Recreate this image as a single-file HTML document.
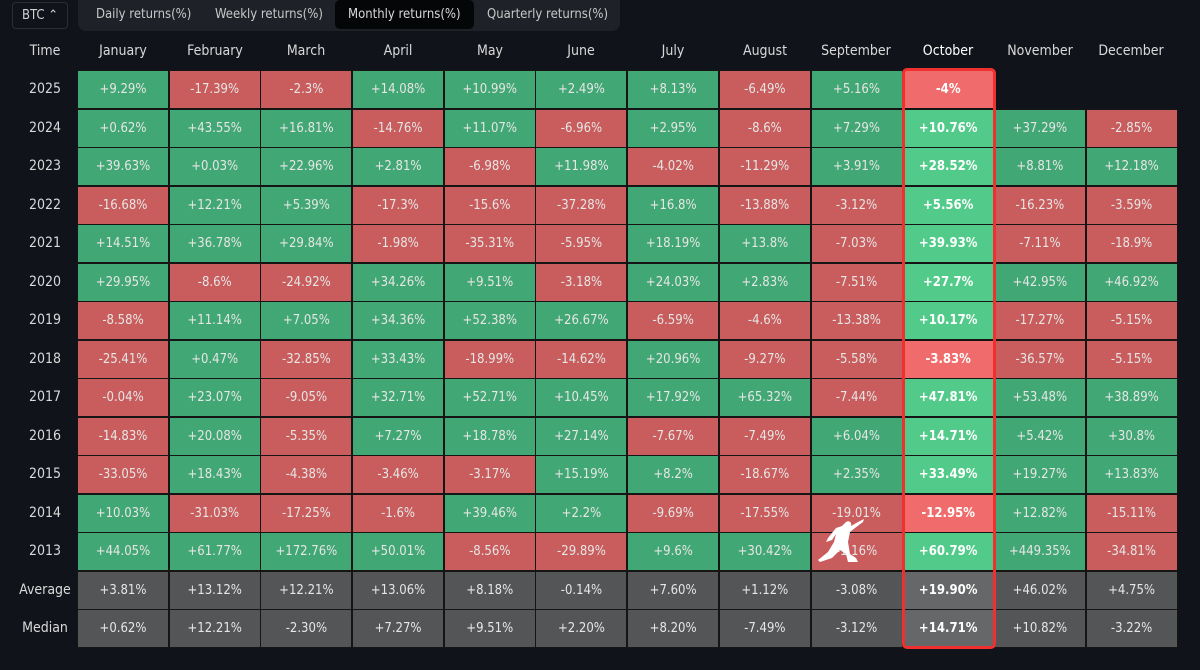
<!DOCTYPE html>
<html><head><meta charset="utf-8"><style>
*{margin:0;padding:0;box-sizing:border-box}
body{width:1200px;height:670px;background:#10131a;font-family:"DejaVu Sans Condensed","Liberation Sans",sans-serif;color:#d9d9d9;position:relative;overflow:hidden}
.btc{position:absolute;left:12px;top:2px;width:56px;height:27px;border:1px solid #2a2e35;border-radius:4px;font-size:13px;color:#d0d0d0;line-height:25px;padding-left:9px}
.tabs{position:absolute;left:78px;top:0;width:542px;height:31px;background:#1e2127;border-radius:0 0 8px 8px;font-size:13px;color:#c8c8c8}
.tabs span{position:absolute;top:7px}
.tabs .act{background:#050608;border-radius:5px;top:0;height:29px;line-height:29px;padding:0 13px;color:#d8d8d8}
.hd{position:absolute;top:43px;font-size:14px;color:#d9d9d9;text-align:center;width:90px}
.yr{position:absolute;left:0;width:90px;text-align:center;font-size:14px;color:#d9d9d9}
.grid{position:absolute;left:78px;top:71px;display:grid;grid-template-columns:repeat(12,90px);grid-auto-rows:37px;column-gap:1.7px;row-gap:1.5px}
.grid div{font-size:13px;text-align:center;line-height:37px;color:#e6e6e6;outline:1px solid #151515}
.g{background:#41a774}.r{background:#c95c5c}.n{background:#545556}.e{background:transparent;outline:none!important}
.G{background:#52cb8a;color:#fff!important;font-weight:bold}.R{background:#f06c6c;color:#fff!important;font-weight:bold}.N{background:#666768;color:#fff!important;font-weight:bold}
.box{position:absolute;left:902px;top:68px;width:94px;height:581px;border:3px solid #f0302f;border-radius:5px}
</style></head><body>
<div class="btc">BTC ⌃</div>
<div class="tabs"><span style="left:18px">Daily returns(%)</span><span style="left:137px">Weekly returns(%)</span><span class="act" style="left:257px">Monthly returns(%)</span><span style="left:409px">Quarterly returns(%)</span></div>
<div class="hd" style="left:0">Time</div>
<div class="hd" style="left:78px">January</div><div class="hd" style="left:170px">February</div><div class="hd" style="left:261px">March</div><div class="hd" style="left:353px">April</div><div class="hd" style="left:445px">May</div><div class="hd" style="left:536px">June</div><div class="hd" style="left:628px">July</div><div class="hd" style="left:720px">August</div><div class="hd" style="left:811px">September</div><div class="hd" style="left:903px;color:#fff">October</div><div class="hd" style="left:995px">November</div><div class="hd" style="left:1086px">December</div>
<div class="yr" style="top:81px">2025</div><div class="yr" style="top:120px">2024</div><div class="yr" style="top:158px">2023</div><div class="yr" style="top:197px">2022</div><div class="yr" style="top:235px">2021</div><div class="yr" style="top:274px">2020</div><div class="yr" style="top:312px">2019</div><div class="yr" style="top:351px">2018</div><div class="yr" style="top:389px">2017</div><div class="yr" style="top:428px">2016</div><div class="yr" style="top:466px">2015</div><div class="yr" style="top:505px">2014</div><div class="yr" style="top:543px">2013</div><div class="yr" style="top:582px">Average</div><div class="yr" style="top:620px">Median</div>
<div class="grid">
<div class="g">+9.29%</div><div class="r">-17.39%</div><div class="r">-2.3%</div><div class="g">+14.08%</div><div class="g">+10.99%</div><div class="g">+2.49%</div><div class="g">+8.13%</div><div class="r">-6.49%</div><div class="g">+5.16%</div><div class="R">-4%</div><div class="e"></div><div class="e"></div>
<div class="g">+0.62%</div><div class="g">+43.55%</div><div class="g">+16.81%</div><div class="r">-14.76%</div><div class="g">+11.07%</div><div class="r">-6.96%</div><div class="g">+2.95%</div><div class="r">-8.6%</div><div class="g">+7.29%</div><div class="G">+10.76%</div><div class="g">+37.29%</div><div class="r">-2.85%</div>
<div class="g">+39.63%</div><div class="g">+0.03%</div><div class="g">+22.96%</div><div class="g">+2.81%</div><div class="r">-6.98%</div><div class="g">+11.98%</div><div class="r">-4.02%</div><div class="r">-11.29%</div><div class="g">+3.91%</div><div class="G">+28.52%</div><div class="g">+8.81%</div><div class="g">+12.18%</div>
<div class="r">-16.68%</div><div class="g">+12.21%</div><div class="g">+5.39%</div><div class="r">-17.3%</div><div class="r">-15.6%</div><div class="r">-37.28%</div><div class="g">+16.8%</div><div class="r">-13.88%</div><div class="r">-3.12%</div><div class="G">+5.56%</div><div class="r">-16.23%</div><div class="r">-3.59%</div>
<div class="g">+14.51%</div><div class="g">+36.78%</div><div class="g">+29.84%</div><div class="r">-1.98%</div><div class="r">-35.31%</div><div class="r">-5.95%</div><div class="g">+18.19%</div><div class="g">+13.8%</div><div class="r">-7.03%</div><div class="G">+39.93%</div><div class="r">-7.11%</div><div class="r">-18.9%</div>
<div class="g">+29.95%</div><div class="r">-8.6%</div><div class="r">-24.92%</div><div class="g">+34.26%</div><div class="g">+9.51%</div><div class="r">-3.18%</div><div class="g">+24.03%</div><div class="g">+2.83%</div><div class="r">-7.51%</div><div class="G">+27.7%</div><div class="g">+42.95%</div><div class="g">+46.92%</div>
<div class="r">-8.58%</div><div class="g">+11.14%</div><div class="g">+7.05%</div><div class="g">+34.36%</div><div class="g">+52.38%</div><div class="g">+26.67%</div><div class="r">-6.59%</div><div class="r">-4.6%</div><div class="r">-13.38%</div><div class="G">+10.17%</div><div class="r">-17.27%</div><div class="r">-5.15%</div>
<div class="r">-25.41%</div><div class="g">+0.47%</div><div class="r">-32.85%</div><div class="g">+33.43%</div><div class="r">-18.99%</div><div class="r">-14.62%</div><div class="g">+20.96%</div><div class="r">-9.27%</div><div class="r">-5.58%</div><div class="R">-3.83%</div><div class="r">-36.57%</div><div class="r">-5.15%</div>
<div class="r">-0.04%</div><div class="g">+23.07%</div><div class="r">-9.05%</div><div class="g">+32.71%</div><div class="g">+52.71%</div><div class="g">+10.45%</div><div class="g">+17.92%</div><div class="g">+65.32%</div><div class="r">-7.44%</div><div class="G">+47.81%</div><div class="g">+53.48%</div><div class="g">+38.89%</div>
<div class="r">-14.83%</div><div class="g">+20.08%</div><div class="r">-5.35%</div><div class="g">+7.27%</div><div class="g">+18.78%</div><div class="g">+27.14%</div><div class="r">-7.67%</div><div class="r">-7.49%</div><div class="g">+6.04%</div><div class="G">+14.71%</div><div class="g">+5.42%</div><div class="g">+30.8%</div>
<div class="r">-33.05%</div><div class="g">+18.43%</div><div class="r">-4.38%</div><div class="r">-3.46%</div><div class="r">-3.17%</div><div class="g">+15.19%</div><div class="g">+8.2%</div><div class="r">-18.67%</div><div class="g">+2.35%</div><div class="G">+33.49%</div><div class="g">+19.27%</div><div class="g">+13.83%</div>
<div class="g">+10.03%</div><div class="r">-31.03%</div><div class="r">-17.25%</div><div class="r">-1.6%</div><div class="g">+39.46%</div><div class="g">+2.2%</div><div class="r">-9.69%</div><div class="r">-17.55%</div><div class="r">-19.01%</div><div class="R">-12.95%</div><div class="g">+12.82%</div><div class="r">-15.11%</div>
<div class="g">+44.05%</div><div class="g">+61.77%</div><div class="g">+172.76%</div><div class="g">+50.01%</div><div class="r">-8.56%</div><div class="r">-29.89%</div><div class="g">+9.6%</div><div class="g">+30.42%</div><div class="r">-1.16%</div><div class="G">+60.79%</div><div class="g">+449.35%</div><div class="r">-34.81%</div>
<div class="n">+3.81%</div><div class="n">+13.12%</div><div class="n">+12.21%</div><div class="n">+13.06%</div><div class="n">+8.18%</div><div class="n">-0.14%</div><div class="n">+7.60%</div><div class="n">+1.12%</div><div class="n">-3.08%</div><div class="N">+19.90%</div><div class="n">+46.02%</div><div class="n">+4.75%</div>
<div class="n">+0.62%</div><div class="n">+12.21%</div><div class="n">-2.30%</div><div class="n">+7.27%</div><div class="n">+9.51%</div><div class="n">+2.20%</div><div class="n">+8.20%</div><div class="n">-7.49%</div><div class="n">-3.12%</div><div class="N">+14.71%</div><div class="n">+10.82%</div><div class="n">-3.22%</div>
</div>
<div class="box"></div>
<svg style="position:absolute;left:818px;top:518px" width="48" height="46" viewBox="0 0 48 46"><path d="M28 4 C31 2 34 4 33 8 L40 4 L46 1 L45 4 L37 10 L32 14 L30 24 L32 36 L38 40 L40 44 L30 44 L28 36 L22 32 L14 40 L2 44 L0 42 L10 34 L16 24 L18 16 L14 22 L8 24 L10 20 L18 10 L24 8 Z" fill="#fff"/></svg>
</body></html>
